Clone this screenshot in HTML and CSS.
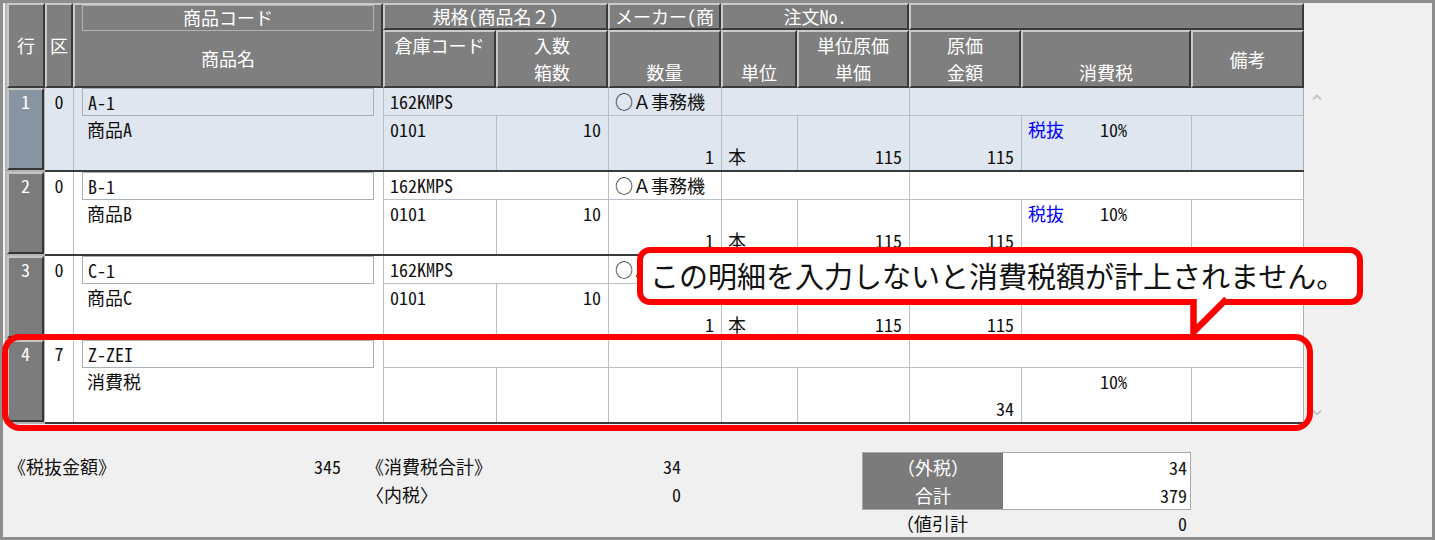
FILE: index.html
```html
<!DOCTYPE html>
<html lang="ja">
  <head>
    <meta charset="utf-8">
    <title>仕入明細入力</title>
    <link rel="stylesheet" href="styles.css">
  </head>
  <body>
    <div class="frame">
      <div class="main">
        <div class="grid">
          <!-- header -->
          <div class="head">
            <div class="h h-tall h-gyo">行</div>
            <div class="h h-tall">区</div>
            <div class="h h-name">
              <div class="h-code">商品コード</div>
              <div class="h-name2">商品名</div>
            </div>
            <div class="h s2">規格(商品名２)</div>
            <div class="h">メーカー(商</div>
            <div class="h s2">注文No.</div>
            <div class="h s3"></div>
            <div class="h hb"><span class="ln">倉庫コード</span></div>
            <div class="h hb"><span class="ln">入数</span><span class="ln">箱数</span></div>
            <div class="h hb"><span class="ln"></span><span class="ln">数量</span></div>
            <div class="h hb"><span class="ln"></span><span class="ln">単位</span></div>
            <div class="h hb"><span class="ln">単位原価</span><span class="ln">単価</span></div>
            <div class="h hb"><span class="ln">原価</span><span class="ln">金額</span></div>
            <div class="h hb"><span class="ln"></span><span class="ln">消費税</span></div>
            <div class="h hb mid"><span class="ln">備考</span></div>
          </div>

          <!-- rows -->
          <div class="row sel">
            <div class="rn"><div class="rn-box">1</div></div>
            <div class="ku">0</div>
            <div class="name"><div class="code-box">A-1</div><div class="name-txt">商品A</div></div>
            <div class="t s2">162KMPS</div>
            <div class="t">○Ａ事務機</div>
            <div class="t s2"></div>
            <div class="t s3 last"></div>
            <div class="b"><span class="ln">0101</span></div>
            <div class="b r"><span class="ln">10</span></div>
            <div class="b r"><span class="ln"></span><span class="ln">1</span></div>
            <div class="b"><span class="ln"></span><span class="ln">本</span></div>
            <div class="b r"><span class="ln"></span><span class="ln">115</span></div>
            <div class="b r"><span class="ln"></span><span class="ln">115</span></div>
            <div class="b"><span class="ln tax"><span class="tk">税抜</span>10%</span></div>
            <div class="b last"></div>
          </div>

          <div class="row">
            <div class="rn"><div class="rn-box">2</div></div>
            <div class="ku">0</div>
            <div class="name"><div class="code-box">B-1</div><div class="name-txt">商品B</div></div>
            <div class="t s2">162KMPS</div>
            <div class="t">○Ａ事務機</div>
            <div class="t s2"></div>
            <div class="t s3 last"></div>
            <div class="b"><span class="ln">0101</span></div>
            <div class="b r"><span class="ln">10</span></div>
            <div class="b r"><span class="ln"></span><span class="ln">1</span></div>
            <div class="b"><span class="ln"></span><span class="ln">本</span></div>
            <div class="b r"><span class="ln"></span><span class="ln">115</span></div>
            <div class="b r"><span class="ln"></span><span class="ln">115</span></div>
            <div class="b"><span class="ln tax"><span class="tk">税抜</span>10%</span></div>
            <div class="b last"></div>
          </div>

          <div class="row">
            <div class="rn"><div class="rn-box">3</div></div>
            <div class="ku">0</div>
            <div class="name"><div class="code-box">C-1</div><div class="name-txt">商品C</div></div>
            <div class="t s2">162KMPS</div>
            <div class="t">○Ａ事務機</div>
            <div class="t s2"></div>
            <div class="t s3 last"></div>
            <div class="b"><span class="ln">0101</span></div>
            <div class="b r"><span class="ln">10</span></div>
            <div class="b r"><span class="ln"></span><span class="ln">1</span></div>
            <div class="b"><span class="ln"></span><span class="ln">本</span></div>
            <div class="b r"><span class="ln"></span><span class="ln">115</span></div>
            <div class="b r"><span class="ln"></span><span class="ln">115</span></div>
            <div class="b"></div>
            <div class="b last"></div>
          </div>

          <div class="row">
            <div class="rn"><div class="rn-box">4</div></div>
            <div class="ku">7</div>
            <div class="name"><div class="code-box">Z-ZEI</div><div class="name-txt">消費税</div></div>
            <div class="t s2"></div>
            <div class="t"></div>
            <div class="t s2"></div>
            <div class="t s3 last"></div>
            <div class="b"></div>
            <div class="b r"></div>
            <div class="b r"></div>
            <div class="b"></div>
            <div class="b r"></div>
            <div class="b r"><span class="ln"></span><span class="ln">34</span></div>
            <div class="b"><span class="ln tax"><span class="tk"></span>10%</span></div>
            <div class="b last"></div>
          </div>
        </div>

        <div class="side">
          <svg class="chev up" width="10" height="6" viewBox="0 0 10 6"><path d="M1 5.5 L5 1.5 L9 5.5"/></svg>
          <svg class="chev down" width="10" height="6" viewBox="0 0 10 6"><path d="M1 0.5 L5 4.5 L9 0.5"/></svg>
        </div>
      </div>

      <!-- totals -->
      <div class="foot">
        <div class="fg fg1">
          <div class="fr"><span>《税抜金額》</span><span>345</span></div>
        </div>
        <div class="fg fg2">
          <div class="fr"><span>《消費税合計》</span><span>34</span></div>
          <div class="fr"><span>〈内税〉</span><span>0</span></div>
        </div>
        <div class="fg fg3">
          <div class="tbox">
            <div class="tl">（外税）</div><div class="tv">34</div>
            <div class="tl">合計</div><div class="tv">379</div>
          </div>
          <div class="fr disc"><span>（値引計</span><span>0</span></div>
        </div>
      </div>
    </div>

    <!-- annotation -->
    <div class="mark"></div>
    <div class="callout">この明細を入力しないと消費税額が計上されません。</div>
    <svg class="tail" width="60" height="56" viewBox="0 0 60 56">
      <path class="tail-fill" d="M13.5 6 L13.5 42 L49.5 6 Z"/>
      <path class="tail-line" d="M13.5 9 L13.5 42 L46.5 9"/>
    </svg>
  </body>
</html>
```

FILE: styles.css
```css
* {
  box-sizing: border-box;
}
body {
  margin: 0;
  position: relative;
  width: 1435px;
  height: 540px;
  overflow: hidden;
  background: #f0f0f0;
  font-family: "Noto Sans Mono CJK JP", "Noto Sans CJK JP", sans-serif;
  font-size: 18px;
  color: #111;
}
.frame {
  width: 1435px;
  height: 540px;
  border: 3px solid #8e8e8e;
}
.main {
  display: flex;
  height: 421px;
}
.grid {
  width: 1299px;
  margin-left: 2px;
  background: #b4b4b4;
}

/* both header and rows use the same columns */
.head,
.row {
  display: grid;
  grid-template-columns: 40px 28px 310px 113px 112px 113px 76px 112px 112px 170px 113px;
}
.s2 {
  grid-column: span 2;
}
.s3 {
  grid-column: span 3;
}
.ln {
  display: block;
  height: 27px;
  line-height: 27px;
  white-space: nowrap;
}

/* header */
.head {
  grid-template-rows: 27px 58px;
}
.h {
  display: flex;
  flex-direction: column;
  align-items: center;
  background: #7f7f7f;
  color: #fff;
  border: 2px solid;
  border-color: #cacaca #3a3a3a #3a3a3a #cacaca;
  line-height: 23px;
  white-space: nowrap;
  overflow: hidden;
}
.h-tall {
  grid-row: span 2;
  justify-content: center;
}
.h-gyo {
  margin-left: 2px;
}
.h-name {
  grid-row: span 2;
  padding: 0 7px;
}
.h-code {
  width: 100%;
  height: 26px;
  border: 1px solid #b2b2b2;
  text-align: center;
  line-height: 23px;
}
.h-name2 {
  flex: 1;
  display: flex;
  align-items: center;
}
.hb.mid {
  justify-content: center;
}

/* detail rows */
.row {
  grid-template-rows: 28px 54px;
  height: 84px;
  background: #fff;
  border-bottom: 2px solid #3a3a3a;
}
.row.sel {
  background: #dfe6ef;
}
.rn {
  grid-row: span 2;
  margin-bottom: -2px;
  padding: 0 1px 2px 2px;
  background: #b4b4b4;
}
.rn-box {
  height: 100%;
  background: #7c7c7c;
  border: 2px solid;
  border-color: #c4c4c4 #363636 #363636 #c4c4c4;
  color: #fff;
  text-align: center;
  line-height: 22px;
}
.sel .rn-box {
  background: #8894a2;
}
.ku {
  grid-row: span 2;
  text-align: center;
  line-height: 27px;
}
.name {
  grid-row: span 2;
  border-left: 1px solid #b8bfc7;
}
.code-box {
  height: 28px;
  margin: 0 9px 0 8px;
  padding-left: 5px;
  border: 1px solid #a8aeb5;
  line-height: 26px;
}
.name-txt {
  padding-left: 13px;
  line-height: 27px;
}
.t {
  padding: 0 6px;
  border-left: 1px solid #b8bfc7;
  border-bottom: 1px solid #b8bfc7;
  line-height: 27px;
  white-space: nowrap;
  overflow: hidden;
}
.b {
  padding: 0 7px 0 6px;
  border-left: 1px solid #b8bfc7;
}
.r {
  text-align: right;
}
.last {
  border-right: 1px solid #a9b0b8;
}
.tax {
  display: flex;
}
.tk {
  width: 72px;
  color: #0000ff;
}

/* scrollbar side */
.side {
  flex: 1;
  display: flex;
  flex-direction: column;
  padding-left: 8px;
}
.chev {
  fill: none;
  stroke: #c4c4c4;
  stroke-width: 1.8;
}
.chev.up {
  margin-top: 91px;
}
.chev.down {
  margin-top: 310px;
}

/* totals */
.foot {
  display: flex;
  padding-top: 28px;
  line-height: 28px;
}
.fr {
  display: flex;
  justify-content: space-between;
  height: 28px;
  white-space: nowrap;
}
.fg1 {
  width: 334px;
  margin-left: 5px;
  padding-right: 1px;
}
.fg2 {
  width: 316px;
  margin-left: 24px;
  padding-right: 1px;
}
.fg3 {
  width: 329px;
  margin-left: 180px;
}
.tbox {
  display: grid;
  grid-template-columns: 140px 187px;
  border: 1px solid #a8a8a8;
}
.tl {
  background: #7b7b7b;
  color: #fff;
  text-align: center;
}
.tv {
  background: #fff;
  text-align: right;
  padding-right: 3px;
}
.disc {
  height: 27px;
  line-height: 27px;
  padding: 0 4px 0 34px;
}

/* red annotation over the grid */
.mark {
  position: absolute;
  left: 2px;
  top: 334px;
  width: 1311px;
  height: 97px;
  border: 6px solid #ff0000;
  border-radius: 18px;
  pointer-events: none;
}
.callout {
  position: absolute;
  left: 637px;
  top: 247px;
  width: 726px;
  height: 58px;
  padding-left: 7px;
  border: 6px solid #ff0000;
  border-radius: 13px;
  background: #fff;
  font-family: "Noto Sans CJK JP", sans-serif;
  font-size: 29px;
  line-height: 45px;
  color: #111;
  white-space: nowrap;
}
.tail {
  position: absolute;
  left: 1180px;
  top: 290px;
}
.tail-fill {
  fill: #fff;
}
.tail-line {
  fill: none;
  stroke: #ff0000;
  stroke-width: 6.5;
}
```
